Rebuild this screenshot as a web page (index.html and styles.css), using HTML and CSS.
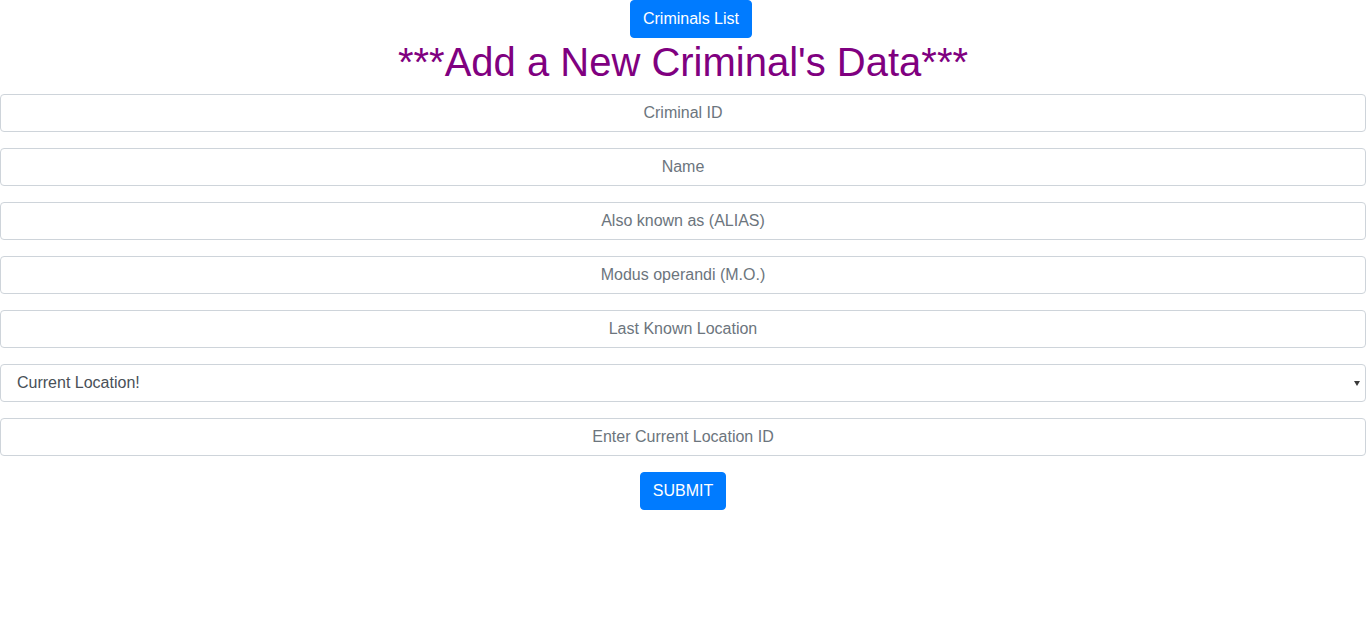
FILE: index.html
```html
<!DOCTYPE html>
<html lang="en">
<head>
<meta charset="utf-8">
<title>Add a New Criminal</title>
<link rel="stylesheet" href="styles.css">
</head>
<body>
<div class="page">
  <div class="top">
    <button class="btn btn-list" type="button">Criminals List</button>
  </div>
  <h1 class="title">***Add a New Criminal's Data***</h1>
  <form class="form">
    <div class="group"><input class="control" type="text" placeholder="Criminal ID"></div>
    <div class="group"><input class="control" type="text" placeholder="Name"></div>
    <div class="group"><input class="control" type="text" placeholder="Also known as (ALIAS)"></div>
    <div class="group"><input class="control" type="text" placeholder="Modus operandi (M.O.)"></div>
    <div class="group"><input class="control" type="text" placeholder="Last Known Location"></div>
    <div class="group select-wrap">
      <select class="control select">
        <option>Current Location!</option>
      </select>
    </div>
    <div class="group"><input class="control" type="text" placeholder="Enter Current Location ID"></div>
    <div class="actions">
      <button class="btn" type="submit">SUBMIT</button>
    </div>
  </form>
</div>
</body>
</html>
```
FILE: styles.css
```css
* { box-sizing: border-box; }
html, body {
  margin: 0;
  padding: 0;
  background: #fff;
  font-family: "Liberation Sans", Arial, sans-serif;
  font-size: 16px;
  line-height: 1.5;
  color: #212529;
}
.page { width: 1366px; }
.top, .actions {
  display: flex;
  justify-content: center;
}
.btn {
  display: inline-block;
  font-family: "Liberation Sans", Arial, sans-serif;
  font-size: 16px;
  line-height: 1.5;
  padding: 6px 12px;
  color: #fff;
  background: #007bff;
  border: 1px solid #007bff;
  border-radius: 4px;
  height: 38px;
  margin: 0;
}
.btn-list { margin-left: 16px; }
.title {
  margin: 0 0 8px 0;
  font-size: 40px;
  font-weight: 400;
  line-height: 1.2;
  text-align: center;
  color: #800080;
}
.form { margin: 0; }
.group { margin-bottom: 16px; }
.control {
  display: block;
  width: 100%;
  height: 38px;
  padding: 6px 12px;
  font-family: "Liberation Sans", Arial, sans-serif;
  font-size: 16px;
  line-height: 1.5;
  color: #495057;
  background: #fff;
  border: 1px solid #ced4da;
  border-radius: 4px;
  text-align: center;
  margin: 0;
}
.control::placeholder { color: #6c757d; opacity: 1; }
.select-wrap { position: relative; }
.select {
  text-align: left;
  -webkit-appearance: none;
  appearance: none;
  padding-left: 16px;
}
.select-wrap::after {
  content: "";
  position: absolute;
  right: 6px;
  top: 17px;
  width: 0;
  height: 0;
  border-left: 3px solid transparent;
  border-right: 3px solid transparent;
  border-top: 5px solid #3a3a3a;
  pointer-events: none;
}
```
